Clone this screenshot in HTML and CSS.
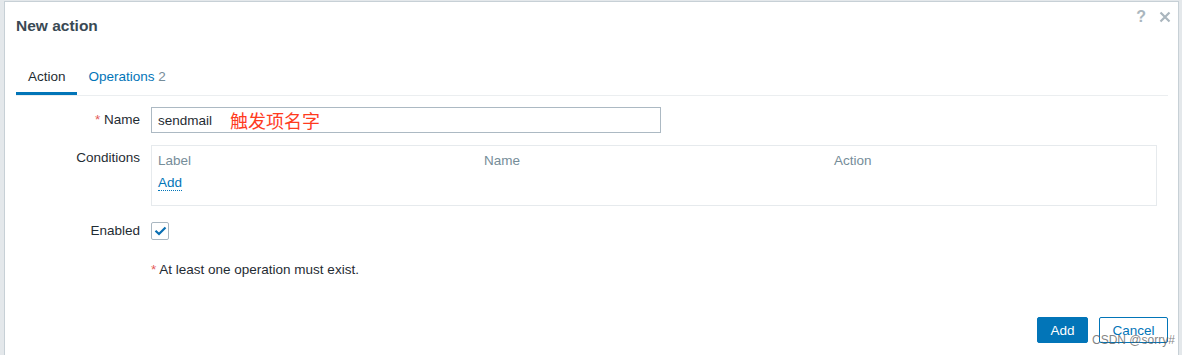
FILE: index.html
```html
<!DOCTYPE html>
<html lang="en">
<head>
  <meta charset="UTF-8" />
  <title>New action</title>
  <link rel="stylesheet" href="styles.css">
</head>
<body>
  <div class="dialog">
    <div class="dialog-header">
      <h4>New action</h4>
      <div class="header-buttons">
        <span class="btn-help">?</span>
        <svg class="btn-close" width="12" height="12" viewBox="0 0 12 12">
          <path d="M1.5 1.5 L10.5 10.5 M10.5 1.5 L1.5 10.5" stroke="#aab6be" stroke-width="2.2" fill="none" />
        </svg>
      </div>
    </div>

    <ul class="tabs">
      <li class="tab active">Action</li>
      <li class="tab">Operations <span class="tab-count">2</span></li>
    </ul>

    <div class="form">
      <label class="form-label"><span class="req">*</span> Name</label>
      <div class="form-field">
        <div class="text-input">
          <span class="value">sendmail</span>
          <span class="note-cn">触发项名字</span>
        </div>
      </div>

      <label class="form-label top">Conditions</label>
      <div class="form-field">
        <div class="conditions">
          <div class="cond-head">
            <span>Label</span>
            <span>Name</span>
            <span>Action</span>
          </div>
          <div class="cond-add"><a class="link">Add</a></div>
        </div>
      </div>

      <label class="form-label">Enabled</label>
      <div class="form-field">
        <span class="checkbox">
          <svg width="13" height="10" viewBox="0 0 13 10">
            <path d="M1.5 4.8 L5 8 L11.5 1.5" stroke="#0a6fb3" stroke-width="2.2" fill="none" />
          </svg>
        </span>
      </div>

      <div class="form-label"></div>
      <div class="form-field message"><span class="req">*</span> At least one operation must exist.</div>
    </div>

    <div class="dialog-footer">
      <button class="btn btn-primary">Add</button>
      <button class="btn btn-alt">Cancel</button>
    </div>

    <div class="watermark">CSDN @sorry#</div>
  </div>
</body>
</html>
```

FILE: styles.css
```css
html, body { height: 100%; }
body {
  margin: 0; padding: 1px 3px 0 4px; box-sizing: border-box;
  background: #e4e8eb; overflow: hidden;
  font-family: "Liberation Sans", Arial, "Noto Sans CJK SC", sans-serif;
  font-size: 13.5px; color: #1f2c33;
}
.dialog {
  position: relative; background: #fff; border: 1px solid #c7d0d6;
  border-bottom: none; height: 400px;
}

.dialog-header { display: flex; justify-content: space-between; padding: 14px 7px 0 11px; }
.dialog-header h4 { margin: 0; font-size: 15.5px; line-height: 20px; font-weight: bold; color: #3a4954; }
.header-buttons { display: flex; align-items: center; gap: 13px; margin-top: -9px; height: 20px; }
.btn-help { color: #aab6be; font-size: 16px; font-weight: bold; line-height: 20px; }
.btn-close { display: block; }

.tabs {
  display: flex; list-style: none; margin: 32px 10px 0 11px; padding: 0;
  border-bottom: 1px solid #ebeef0;
}
.tab { padding: 0 11px 6px 12px; line-height: 18px; border-bottom: 3px solid transparent; color: #0275b8; }
.tab.active { color: #1f2c33; border-bottom-color: #0275b8; }
.tab-count { color: #768d99; }

.form {
  display: grid; grid-template-columns: 124px 1006px; column-gap: 11px; row-gap: 12px;
  align-items: center; padding: 11px 0 0 11px;
}
.form-label { text-align: right; line-height: 18px; }
.form-label.top { align-self: start; padding-top: 4px; }
.req { color: #e45959; }

.text-input {
  width: 510px; height: 26px; box-sizing: border-box; border: 1px solid #acb9c3;
  display: flex; align-items: center; padding: 0 6px; gap: 18px;
}
.note-cn { color: #ff3b1f; font-size: 18px; font-family: "Noto Sans CJK SC", sans-serif; line-height: 24px; }

.conditions { border: 1px solid #e6eaed; padding: 5px 6px 11px; height: 61px; box-sizing: border-box; }
.cond-head { display: grid; grid-template-columns: 326px 350px 1fr; line-height: 20px; color: #768d99; }
.cond-add { margin-top: 3px; line-height: 18px; }
.link { color: #0275b8; border-bottom: 1px dotted #0275b8; cursor: pointer; }

.checkbox {
  display: flex; align-items: center; justify-content: center;
  width: 18px; height: 18px; box-sizing: border-box; margin: 4px 0;
  border: 1px solid #a9b7c1; border-radius: 2px;
}
.message { line-height: 26px; margin-top: 1px; }

.dialog-footer { display: flex; justify-content: flex-end; gap: 11px; padding: 34px 10px 0 0; }
.btn {
  height: 26px; padding: 0 12px; font-family: inherit; font-size: 13.5px;
  border-radius: 2px; cursor: pointer;
}
.btn-primary { background: #0275b8; color: #fff; border: 1px solid #0275b8; width: 51px; }
.btn-alt { background: #fff; color: #0275b8; border: 1px solid #0275b8; width: 69px; }

.watermark {
  position: absolute; left: 1087px; top: 331px; font-size: 12px;
  color: rgba(90, 90, 90, 0.75); white-space: nowrap;
}
```
